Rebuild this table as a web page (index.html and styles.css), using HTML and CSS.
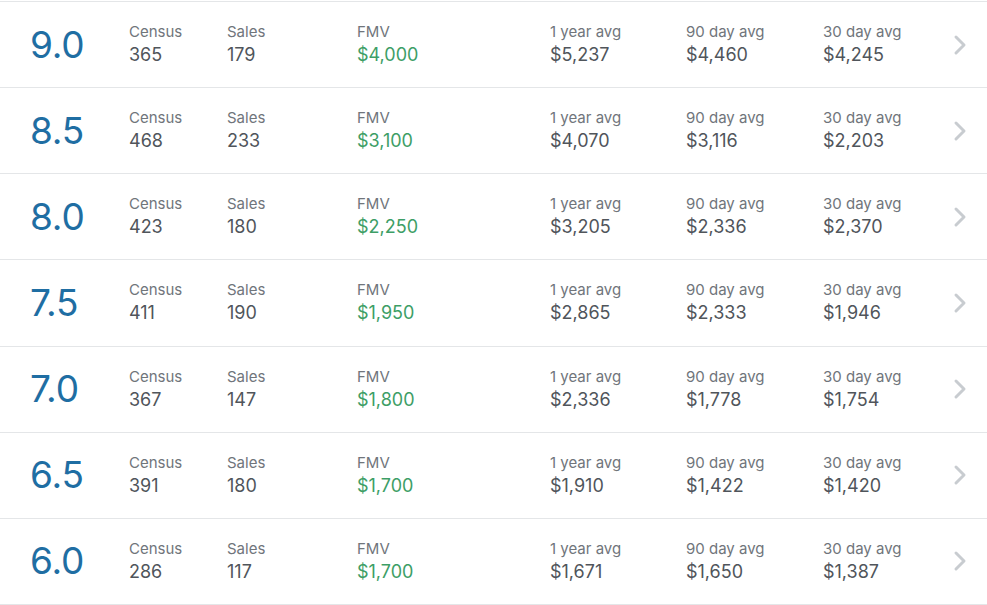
FILE: index.html
```html
<!DOCTYPE html>
<html>
<head>
<meta charset="utf-8">
<link rel="stylesheet" href="styles.css">
</head>
<body>
<div class="list">
  <div class="row">
    <div class="grade">9.0</div>
    <div class="cell c-census"><div class="label">Census</div><div class="value">365</div></div>
    <div class="cell c-sales"><div class="label">Sales</div><div class="value">179</div></div>
    <div class="cell c-fmv"><div class="label">FMV</div><div class="value green">$4,000</div></div>
    <div class="cell c-y"><div class="label">1 year avg</div><div class="value">$5,237</div></div>
    <div class="cell c-90"><div class="label">90 day avg</div><div class="value">$4,460</div></div>
    <div class="cell c-30"><div class="label">30 day avg</div><div class="value">$4,245</div></div>
    <svg class="chev" width="16" height="22" viewBox="0 0 16 22"><path d="M4 3 L12 11 L4 19" fill="none" stroke="#c8ccd0" stroke-width="3" stroke-linecap="round" stroke-linejoin="round"/></svg>
  </div>
  <div class="row">
    <div class="grade">8.5</div>
    <div class="cell c-census"><div class="label">Census</div><div class="value">468</div></div>
    <div class="cell c-sales"><div class="label">Sales</div><div class="value">233</div></div>
    <div class="cell c-fmv"><div class="label">FMV</div><div class="value green">$3,100</div></div>
    <div class="cell c-y"><div class="label">1 year avg</div><div class="value">$4,070</div></div>
    <div class="cell c-90"><div class="label">90 day avg</div><div class="value">$3,116</div></div>
    <div class="cell c-30"><div class="label">30 day avg</div><div class="value">$2,203</div></div>
    <svg class="chev" width="16" height="22" viewBox="0 0 16 22"><path d="M4 3 L12 11 L4 19" fill="none" stroke="#c8ccd0" stroke-width="3" stroke-linecap="round" stroke-linejoin="round"/></svg>
  </div>
  <div class="row">
    <div class="grade">8.0</div>
    <div class="cell c-census"><div class="label">Census</div><div class="value">423</div></div>
    <div class="cell c-sales"><div class="label">Sales</div><div class="value">180</div></div>
    <div class="cell c-fmv"><div class="label">FMV</div><div class="value green">$2,250</div></div>
    <div class="cell c-y"><div class="label">1 year avg</div><div class="value">$3,205</div></div>
    <div class="cell c-90"><div class="label">90 day avg</div><div class="value">$2,336</div></div>
    <div class="cell c-30"><div class="label">30 day avg</div><div class="value">$2,370</div></div>
    <svg class="chev" width="16" height="22" viewBox="0 0 16 22"><path d="M4 3 L12 11 L4 19" fill="none" stroke="#c8ccd0" stroke-width="3" stroke-linecap="round" stroke-linejoin="round"/></svg>
  </div>
  <div class="row">
    <div class="grade">7.5</div>
    <div class="cell c-census"><div class="label">Census</div><div class="value">411</div></div>
    <div class="cell c-sales"><div class="label">Sales</div><div class="value">190</div></div>
    <div class="cell c-fmv"><div class="label">FMV</div><div class="value green">$1,950</div></div>
    <div class="cell c-y"><div class="label">1 year avg</div><div class="value">$2,865</div></div>
    <div class="cell c-90"><div class="label">90 day avg</div><div class="value">$2,333</div></div>
    <div class="cell c-30"><div class="label">30 day avg</div><div class="value">$1,946</div></div>
    <svg class="chev" width="16" height="22" viewBox="0 0 16 22"><path d="M4 3 L12 11 L4 19" fill="none" stroke="#c8ccd0" stroke-width="3" stroke-linecap="round" stroke-linejoin="round"/></svg>
  </div>
  <div class="row">
    <div class="grade">7.0</div>
    <div class="cell c-census"><div class="label">Census</div><div class="value">367</div></div>
    <div class="cell c-sales"><div class="label">Sales</div><div class="value">147</div></div>
    <div class="cell c-fmv"><div class="label">FMV</div><div class="value green">$1,800</div></div>
    <div class="cell c-y"><div class="label">1 year avg</div><div class="value">$2,336</div></div>
    <div class="cell c-90"><div class="label">90 day avg</div><div class="value">$1,778</div></div>
    <div class="cell c-30"><div class="label">30 day avg</div><div class="value">$1,754</div></div>
    <svg class="chev" width="16" height="22" viewBox="0 0 16 22"><path d="M4 3 L12 11 L4 19" fill="none" stroke="#c8ccd0" stroke-width="3" stroke-linecap="round" stroke-linejoin="round"/></svg>
  </div>
  <div class="row">
    <div class="grade">6.5</div>
    <div class="cell c-census"><div class="label">Census</div><div class="value">391</div></div>
    <div class="cell c-sales"><div class="label">Sales</div><div class="value">180</div></div>
    <div class="cell c-fmv"><div class="label">FMV</div><div class="value green">$1,700</div></div>
    <div class="cell c-y"><div class="label">1 year avg</div><div class="value">$1,910</div></div>
    <div class="cell c-90"><div class="label">90 day avg</div><div class="value">$1,422</div></div>
    <div class="cell c-30"><div class="label">30 day avg</div><div class="value">$1,420</div></div>
    <svg class="chev" width="16" height="22" viewBox="0 0 16 22"><path d="M4 3 L12 11 L4 19" fill="none" stroke="#c8ccd0" stroke-width="3" stroke-linecap="round" stroke-linejoin="round"/></svg>
  </div>
  <div class="row">
    <div class="grade">6.0</div>
    <div class="cell c-census"><div class="label">Census</div><div class="value">286</div></div>
    <div class="cell c-sales"><div class="label">Sales</div><div class="value">117</div></div>
    <div class="cell c-fmv"><div class="label">FMV</div><div class="value green">$1,700</div></div>
    <div class="cell c-y"><div class="label">1 year avg</div><div class="value">$1,671</div></div>
    <div class="cell c-90"><div class="label">90 day avg</div><div class="value">$1,650</div></div>
    <div class="cell c-30"><div class="label">30 day avg</div><div class="value">$1,387</div></div>
    <svg class="chev" width="16" height="22" viewBox="0 0 16 22"><path d="M4 3 L12 11 L4 19" fill="none" stroke="#c8ccd0" stroke-width="3" stroke-linecap="round" stroke-linejoin="round"/></svg>
  </div>
</div>
</body>
</html>
```
FILE: styles.css
```css
html, body {
  margin: 0;
  padding: 0;
  background: #ffffff;
}
body {
  font-family: Inter, "Noto Sans", sans-serif;
  color: #50555b;
}
.list {
  padding-top: 1px;
  border-bottom: 1px solid #e4e6e8;
}
.row {
  display: flex;
  align-items: center;
  height: 85.14px;
  border-top: 1px solid #e4e6e8;
  padding-left: 30px;
}
.grade {
  width: 99px;
  font-size: 37px;
  line-height: 44px;
  color: #1f6ea3;
  letter-spacing: -0.2px;
}
.cell {
  display: flex;
  flex-direction: column;
  gap: 1px;
}
.label {
  font-size: 15px;
  line-height: 20px;
  color: #70757b;
}
.value {
  font-size: 18px;
  line-height: 24px;
  color: #50555b;
}
.value.green {
  color: #3d9e66;
}
.c-census { width: 98px; }
.c-sales { width: 130px; }
.c-fmv { width: 193px; }
.c-y { width: 136px; }
.c-90 { width: 137px; }
.c-30 { width: 129px; }
.chev {
  display: block;
}
```
